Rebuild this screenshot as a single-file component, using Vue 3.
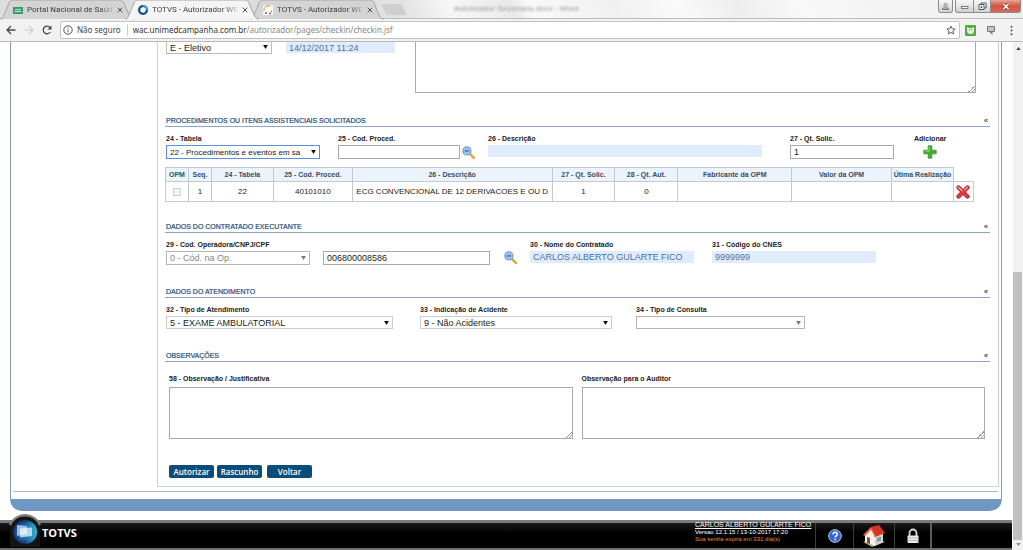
<script setup>
import { ref } from 'vue'

const tabs = [
  { title: 'Portal Nacional de Saúd', icon: 'portal', active: false },
  { title: 'TOTVS - Autorizador WE', icon: 'ring', active: true },
  { title: 'TOTVS - Autorizador WE', icon: 'dots', active: false },
]
const columns = [
  { label: 'OPM', width: 23 },
  { label: 'Seq.', width: 23 },
  { label: '24 - Tabela', width: 62 },
  { label: '25 - Cod. Proced.', width: 79 },
  { label: '26 - Descrição', width: 200 },
  { label: '27 - Qt. Solic.', width: 63 },
  { label: '28 - Qt. Aut.', width: 63 },
  { label: 'Fabricante da OPM', width: 114 },
  { label: 'Valor da OPM', width: 100 },
  { label: 'Útima Realização', width: 62 },
]
const total = 809
const rows = [['1', '22', '40101010', 'ECG CONVENCIONAL DE 12 DERIVACOES E OU D', '1', '0', '', '', '']]
const url = ref('wac.unimedcampanha.com.br')
</script>

<template>
  <div class="browser">
    <header class="tabstrip">
      <div class="tabs">
        <div v-for="(t, i) in tabs" :key="i" class="tab" :class="{ active: t.active }">
          <svg class="tab-shape" viewBox="0 0 134 19" preserveAspectRatio="none" aria-hidden="true">
            <path d="M0 19C3 19 3 17 4 15L9 3C10 1 11 0 13 0H120C122 0 123 1 124 3L129 15C130 17 131 19 134 19" />
          </svg>
          <svg v-if="t.icon === 'portal'" class="favicon" viewBox="0 0 10 10" aria-hidden="true">
            <rect y="2" width="10" height="7" fill="#2e9e69" />
            <path d="M1.500 6.500h7M2 4.500h2M6 4.500h2M5 3.500v2" stroke="#c4ecd6" />
          </svg>
          <svg v-else-if="t.icon === 'ring'" class="favicon" viewBox="0 0 10 10" aria-hidden="true">
            <circle cx="5" cy="5" r="5" fill="#15507c" />
            <path d="M5 0a5 5 0 0 1 5 5L5 5z" fill="#2aa9bd" />
            <circle cx="5" cy="5" r="2.700" fill="#f4fbff" />
          </svg>
          <svg v-else class="favicon" viewBox="0 0 10 10" fill="none" aria-hidden="true">
            <rect width="10" height="10" fill="#fbfbfb" />
            <path d="M7.500 1H5a4 4 0 0 0-4 4v1" stroke="#edb45c" stroke-width="1.300" />
            <path d="M2 8h2M6 8.500h2M8 6.500h1" stroke="#b0527a" stroke-width="1.300" />
          </svg>
          <span class="tab-title">{{ t.title }}</span>
          <button class="tab-close" aria-label="Fechar aba">
            <svg viewBox="0 0 6 6" aria-hidden="true"><path d="M.7.7l4.600 4.600M5.300.7L.7 5.300" stroke="#4c4c4c" fill="none" /></svg>
          </button>
        </div>
        <button class="new-tab" aria-label="Nova aba"></button>
      </div>
      <span class="ghost">Autorizador Secretaria.docx - Word</span>
      <div class="window-buttons">
        <button class="user" aria-label="Usuário">
          <svg viewBox="0 0 12 11" fill="none" stroke="#777"><circle cx="6" cy="4" r="1.500" /><path d="M3 8.500V7h6v1.500z" /></svg>
        </button>
        <button class="min" aria-label="Minimizar">
          <svg viewBox="0 0 14 11"><rect x="4" y="5.500" width="6.500" height="2" fill="#fff" stroke="#566070" stroke-width=".8" /></svg>
        </button>
        <button class="max" aria-label="Restaurar">
          <svg viewBox="0 0 14 11" fill="#fff" stroke="#4c5668"><path d="M6 2h5v5H6z" /><path d="M4 3.500h5V8.500H4zM6 5.500h1v1H6z" /></svg>
        </button>
        <button class="close" aria-label="Fechar">
          <svg viewBox="0 0 24 11"><path d="M10 3l5 5M15 3l-5 5" stroke="#743" stroke-width="2.600" /><path d="M10 3l5 5M15 3l-5 5" stroke="#fff" stroke-width="1.500" /></svg>
        </button>
      </div>
    </header>

    <nav class="toolbar">
      <button aria-label="Voltar página"><svg viewBox="0 0 10 10"><path d="M9.500 5H1.500M5 1L1 5l4 4" stroke="#484848" stroke-width="1.300" fill="none" /></svg></button>
      <button aria-label="Avançar"><svg viewBox="0 0 10 10"><path d="M.5 5h8M5 1l4 4-4 4" stroke="#cfcfcf" stroke-width="1.200" fill="none" /></svg></button>
      <button aria-label="Recarregar"><svg viewBox="0 0 10 10"><path d="M8.300 7A3.800 3.800 0 1 1 8 2.500" stroke="#484848" stroke-width="1.300" fill="none" /><path d="M9.500.5v4h-4z" fill="#484848" /></svg></button>
      <div class="address">
        <svg class="info" viewBox="0 0 10 10" fill="none" stroke="#555"><circle cx="5" cy="5" r="4.200" /><path d="M5 4.500v3M5 2.500v1" /></svg>
        <span class="insecure">Não seguro</span>
        <span class="url">{{ url }}<i>/autorizador/pages/checkin/checkin.jsf</i></span>
        <svg class="star" viewBox="0 0 10 10"><path d="M5 1l1.200 2.800 3 .2-2.300 2 .8 3L5 7.400 2.300 9l.8-3L.8 4l3-.2z" fill="none" stroke="#555" stroke-width=".9" /></svg>
      </div>
      <div class="extensions">
        <svg viewBox="0 0 11 11"><rect width="11" height="11" rx="1" fill="#4fae3e" /><path d="M2 2v3.500a3.500 3.500 0 0 0 7 0V2L7.500 3h-4z" fill="#e5f5df" /><path d="M4.500 4v1.500M6.500 4v1.500" stroke="#4fae3e" /></svg>
        <svg viewBox="0 0 11 11"><path d="M2 1.500h7v5H2z" fill="#c4c4c4" stroke="#777" /><path d="M4 7l3 3V7z" fill="#777" /></svg>
        <svg viewBox="0 0 11 11" fill="#555"><circle cx="5.500" cy="1.800" r="1" /><circle cx="5.500" cy="5.500" r="1" /><circle cx="5.500" cy="9.200" r="1" /></svg>
      </div>
    </nav>

    <div class="viewport">
      <div class="page">
        <main class="frame">
          <form class="panel" @submit.prevent>
            <div class="grid g-top">
              <div class="select cut"><select aria-label="Caráter do atendimento"><option>E - Eletivo</option></select><svg viewBox="0 0 6 5"><path d="M0 0h6L3 5z" /></svg></div>
              <input class="readonly cut-date" aria-label="Data" value="14/12/2017 11:24" readonly />
              <div class="area cut-area"><textarea aria-label="Indicação clínica"></textarea></div>
            </div>

            <section>
              <h2>PROCEDIMENTOS OU ITENS ASSISTENCIAIS SOLICITADOS<a href="#" aria-label="Recolher">«</a></h2>
              <div class="grid g-proc">
                <div class="field">
                  <label for="tabela">24 - Tabela</label>
                  <div class="select focus"><select id="tabela"><option>22 - Procedimentos e eventos em sa</option></select><svg viewBox="0 0 6 5"><path d="M0 0h6L3 5z" /></svg></div>
                </div>
                <div class="field">
                  <label for="cod">25 - Cod. Proced.</label>
                  <div class="with-icon">
                    <input id="cod" type="text" />
                    <button class="icon" aria-label="Pesquisar procedimento"><svg viewBox="0 0 12 12"><path d="M7 7l4 4" stroke="#d9a441" stroke-width="2.200" stroke-linecap="round" /><circle cx="4.500" cy="4.500" r="3.800" fill="#9cc3ee" stroke="#7f9cc4" /><path d="M2.500 4.500h4" stroke="#4d7fc0" stroke-width="1.500" /></svg></button>
                  </div>
                </div>
                <div class="field">
                  <label for="desc">26 - Descrição</label>
                  <input id="desc" class="readonly" readonly />
                </div>
                <div class="field">
                  <label for="qt">27 - Qt. Solic.</label>
                  <input id="qt" type="text" value="1" />
                </div>
                <div class="field add">
                  <label for="add">Adicionar</label>
                  <button id="add" class="icon"><svg viewBox="0 0 14 14"><path d="M5.200.8h3.600v4.400h4.400v3.600H8.800v4.400H5.200V8.800H.8V5.200h4.400z" fill="#45ae32" stroke="#2d8a22" stroke-width=".7" /><path d="M6.200 2v4.200H2" fill="none" stroke="#a6e38f" stroke-width=".8" /></svg></button>
                </div>
              </div>

              <table>
                <colgroup>
                  <col v-for="c in columns" :key="c.label" :style="{ width: (c.width / total) * 100 + '%' }" />
                  <col class="del-col" />
                </colgroup>
                <thead>
                  <tr><th v-for="c in columns" :key="c.label" scope="col">{{ c.label }}</th><td class="blank"></td></tr>
                </thead>
                <tbody>
                  <tr v-for="(r, i) in rows" :key="i">
                    <td><input type="checkbox" aria-label="OPM" disabled /></td>
                    <td v-for="(v, k) in r" :key="k">{{ v }}</td>
                    <td><button class="icon del" aria-label="Excluir"><svg viewBox="0 0 14 14"><path d="M2.500 2.500l9 9M11.500 2.500l-9 9" stroke="#a91620" stroke-width="4.200" stroke-linecap="round" /><path d="M2.500 2.500l9 9M11.500 2.500l-9 9" stroke="#e63b42" stroke-width="2.800" stroke-linecap="round" /><path d="M2.300 2.300L6 5.500M11.500 2.300L9 4.500" stroke="#f8b2b2" stroke-width="1.200" stroke-linecap="round" /></svg></button></td>
                  </tr>
                </tbody>
              </table>
            </section>

            <section class="after-table">
              <h2>DADOS DO CONTRATADO EXECUTANTE<a href="#" aria-label="Recolher">«</a></h2>
              <div class="grid g-exec">
                <div class="field">
                  <label for="oper">29 - Cod. Operadora/CNPJ/CPF</label>
                  <div class="select disabled"><select id="oper" disabled><option>0 - Cód. na Op.</option></select><svg viewBox="0 0 6 5"><path d="M0 0h6L3 5z" /></svg></div>
                </div>
                <div class="field end"><input type="text" aria-label="Código na operadora" value="006800008586" /></div>
                <div class="field end"><button class="icon" aria-label="Pesquisar contratado"><svg viewBox="0 0 12 12"><path d="M7 7l4 4" stroke="#d9a441" stroke-width="2.200" stroke-linecap="round" /><circle cx="4.500" cy="4.500" r="3.800" fill="#9cc3ee" stroke="#7f9cc4" /><path d="M2.500 4.500h4" stroke="#4d7fc0" stroke-width="1.500" /></svg></button></div>
                <div class="field">
                  <label for="nome">30 - Nome do Contratado</label>
                  <input id="nome" class="readonly" value="CARLOS ALBERTO GULARTE FICO" readonly />
                </div>
                <div class="field">
                  <label for="cnes">31 - Código do CNES</label>
                  <input id="cnes" class="readonly" value="9999999" readonly />
                </div>
              </div>
            </section>

            <section>
              <h2>DADOS DO ATENDIMENTO<a href="#" aria-label="Recolher">«</a></h2>
              <div class="grid g-atend">
                <div class="field">
                  <label for="tipo">32 - Tipo de Atendimento</label>
                  <div class="select light"><select id="tipo"><option>5 - EXAME AMBULATORIAL</option></select><svg viewBox="0 0 6 5"><path d="M0 0h6L3 5z" /></svg></div>
                </div>
                <div class="field">
                  <label for="acid">33 - Indicação de Acidente</label>
                  <div class="select light"><select id="acid"><option>9 - Não Acidentes</option></select><svg viewBox="0 0 6 5"><path d="M0 0h6L3 5z" /></svg></div>
                </div>
                <div class="field">
                  <label for="cons">34 - Tipo de Consulta</label>
                  <div class="select disabled"><select id="cons" disabled><option></option></select><svg viewBox="0 0 6 5"><path d="M0 0h6L3 5z" /></svg></div>
                </div>
              </div>
            </section>

            <section>
              <h2>OBSERVAÇÕES<a href="#" aria-label="Recolher">«</a></h2>
              <div class="notes">
                <div class="note">
                  <label for="obs">58 - Observação / Justificativa</label>
                  <div class="area"><textarea id="obs"></textarea></div>
                </div>
                <div class="note">
                  <label for="aud">Observação para o Auditor</label>
                  <div class="area"><textarea id="aud"></textarea></div>
                </div>
              </div>
              <div class="actions">
                <button>Autorizar</button><button>Rascunho</button><button class="back">Voltar</button>
              </div>
            </section>
          </form>
        </main>

        <footer>
          <div class="brand">
            <svg viewBox="0 0 36 34" aria-hidden="true">
              <defs>
                <radialGradient id="orb" cx=".5" cy=".5" r=".55">
                  <stop offset="0" stop-color="#3f8fd0" /><stop offset=".6" stop-color="#1d5aa0" /><stop offset="1" stop-color="#191a50" />
                </radialGradient>
                <linearGradient id="sheen"><stop offset=".5" stop-color="#27c7d6" stop-opacity="0" /><stop offset="1" stop-color="#27c7d6" /></linearGradient>
              </defs>
              <path d="M3 11A16.500 16.500 0 0 1 33 11V33H3z" fill="#141414" />
              <path d="M3 11A16.500 16.500 0 0 1 33 11" fill="none" stroke="#7d7d7d" stroke-width="2.500" />
              <circle cx="18" cy="18" r="12" fill="url(#orb)" /><circle cx="18" cy="18" r="12" fill="url(#sheen)" />
              <path d="M10 11l10 1v8L10 22z" fill="#b9d9f2" opacity=".8" />
              <path d="M13 14.500l12-1v8.500l-12 1.500z" fill="#fff" opacity=".65" />
            </svg>
            <strong>TOTVS</strong>
          </div>
          <div class="session">
            <a href="#">CARLOS ALBERTO GULARTE FICO</a>
            <span>Versao 12.1.15 / 13-10-2017 17:20</span>
            <span class="warn">Sua senha expira em 331 dia(s)</span>
          </div>
          <button class="help" aria-label="Ajuda"><svg viewBox="0 0 14 14"><circle cx="7" cy="7" r="6.300" fill="#3565cc" stroke="#b8cdf2" /><path d="M5 5.500c0-3 4.200-2.700 4.200-.2C9.200 7 7.200 6.800 7.200 8.500M7.200 9.700v1.500" stroke="#fff" stroke-width="1.500" fill="none" /></svg></button>
          <button class="home" aria-label="Início"><svg viewBox="0 0 24 24"><path d="M1 18l9 5 13-5-9-4z" fill="#92b178" /><path d="M3 10l7-6 3 9v9l-10-4z" fill="#f5f2ea" /><path d="M13 12l8-3v9l-8 4z" fill="#d9d3c7" /><path d="M9 3l8-2 6 8-10 4z" fill="#d43425" /><path d="M9 3l-8 8 2 1 6-6 4 7 1-1z" fill="#f0624b" /><path d="M5 13l3 1v6l-3-1z" fill="#8d4a2b" /><path d="M15 14l4-1.500v4L15 18z" fill="#7b98bb" /></svg></button>
          <button class="lock" aria-label="Bloquear"><svg viewBox="0 0 14 16"><path d="M3.500 8V5a3.500 3.500 0 0 1 7 0v3" fill="none" stroke="#d9d9d9" stroke-width="1.800" /><rect x="1.500" y="7.500" width="11" height="7.500" rx="1" fill="#e9e9e6" /><path d="M2 10h10M2 12.500h10" stroke="#b8b8b4" /></svg></button>
          <div class="rest"></div>
        </footer>
      </div>
      <div class="scrollbar" aria-hidden="true">
        <svg viewBox="0 0 6 4"><path d="M0 4l3-4 3 4z" fill="#404040" /></svg>
        <div class="track"><div class="thumb"></div></div>
        <svg viewBox="0 0 6 4"><path d="M0 0l3 4 3-4z" fill="#8a8a8a" /></svg>
      </div>
    </div>
  </div>
</template>

<style>
body { margin: 0; background: #fff; }
</style>

<style scoped>
* { box-sizing: border-box; }
.browser { min-height: 100vh; display: flex; flex-direction: column; font-family: "Liberation Sans", Arial, sans-serif; font-size: 8px; color: #222; }
button { border: 0; padding: 0; background: none; font: inherit; display: block; }
svg { display: block; }

.tabstrip { height: 19px; display: flex; align-items: flex-start; background: linear-gradient(62deg, #dcdcdc 0 34%, #e4e4e4 40%, #f7f7f7 44%, #e9e9e9 50%, #fafafa 52%, #f0f0f0 60%, #fafafa 66%, #eee 72%, #f8f8f8 78%, #ededed); border-bottom: 1px solid #bdbdbd; }
.tabs { display: flex; padding-left: 4px; }
.tab { width: 125px; height: 19px; position: relative; display: flex; align-items: center; padding: 0 6px 0 9px; font-family: Roboto, sans-serif; }
.tab-shape { position: absolute; left: -4px; top: 0; width: 134px; height: 19px; overflow: visible; }
.tab-shape path { fill: #d4d4d4; stroke: #a6a6a6; }
.active { z-index: 1; }
.active .tab-shape path { fill: #f4f4f4; }
.favicon { width: 10px; height: 10px; flex: none; position: relative; }
.tab-title { position: relative; flex: 1; margin: 0 2px 0 4px; white-space: nowrap; color: #3c3c3c; -webkit-mask-image: linear-gradient(90deg, #000 82%, transparent); mask-image: linear-gradient(90deg, #000 82%, transparent); }
.tab-close { position: relative; }
.tab-close svg { width: 6px; height: 6px; }
.new-tab { width: 20px; height: 11px; margin: 4px 0 0 5px; background: #cfcfcf; border-radius: 2px; transform: skewX(24deg); }
.ghost { margin-left: 50px; line-height: 17px; color: #999; filter: blur(1px); }
.window-buttons { margin-left: auto; display: flex; padding-right: 2px; }
.window-buttons button { height: 13px; border: 1px solid #8d8d8d; border-top: 0; background: linear-gradient(#f7f7f7, #d2d2d2); }
.window-buttons svg { height: 11px; width: 100%; }
.window-buttons .user { width: 15px; margin-right: 2px; border-radius: 0 0 3px 3px; }
.window-buttons .min { width: 19px; border-radius: 0 0 0 3px; }
.window-buttons .max { width: 17px; border-left: 0; }
.window-buttons .close { width: 30px; border-left: 0; border-radius: 0 0 3px 0; background: linear-gradient(#e8a597, #d0543f 50%, #d8685a); }

.toolbar { height: 23px; display: flex; align-items: center; padding: 0 6px; background: #f2f2f2; border-bottom: 1px solid #b9b9b9; font-family: "Noto Sans", sans-serif; }
.toolbar button { margin-right: 8px; }
.toolbar button svg { width: 10px; height: 10px; }
.address { flex: 1; height: 18px; display: flex; align-items: center; border: 1px solid #c2c2c2; border-radius: 2px; background: #fff; padding: 0 3px 0 2px; white-space: nowrap; line-height: 12px; }
.info, .star { width: 10px; height: 10px; flex: none; }
.insecure { margin-left: 4px; padding-right: 6px; border-right: 1px solid #ccc; color: #444; }
.url { margin-left: 5px; flex: 1; color: #333; }
.url i { font-style: normal; color: #888; }
.extensions { display: flex; gap: 9px; margin-left: 5px; }
.extensions svg { width: 11px; height: 11px; }
.extensions svg:nth-child(2) { width: 12px; }

.viewport { flex: 1; display: flex; }
.page { flex: 1; min-width: 0; display: flex; flex-direction: column; }
.frame { margin: 0 10px; border: 1px solid #7c9cc4; border-top: 0; border-bottom: 12px solid #7097c1; border-radius: 0 0 12px 12px; padding: 0 2px 12px; }
.panel { border: 1px solid #c3d5e8; border-top: 0; margin-left: 144px; padding: 0 8px 8px 7px; position: relative; }
.panel::after { content: ""; position: absolute; left: -145px; right: 0; bottom: -6px; border-bottom: 1px solid #a9bbd0; }

.grid { display: grid; padding-left: 1px; }
.g-top { grid-template-columns: 120fr 129fr 575fr; }
.g-proc { grid-template-columns: 172fr 150fr 302fr 124fr 76fr; }
.g-exec { grid-template-columns: 157fr 181fr 26fr 182fr 278fr; }
.g-atend { grid-template-columns: 254fr 216fr 354fr; }
.g-top > .select { margin-right: 14px; }
.g-top > .readonly { width: calc(100% - 20px); }
.g-top > .area { margin-right: 14px; }
.g-proc .field:nth-child(1) { padding-right: 18px; }
.g-proc .field:nth-child(2) { padding-right: 13px; }
.g-proc .field:nth-child(3) { padding-right: 28px; }
.g-proc .field:nth-child(4) { padding-right: 20px; }
.g-exec .field:nth-child(1) { padding-right: 13px; }
.g-exec .field:nth-child(2) { padding-right: 14px; }
.g-exec .field:nth-child(4) { padding-right: 18px; }
.g-exec .field:nth-child(5) { padding-right: 114px; }
.g-atend .field:nth-child(1) { padding-right: 27px; }
.g-atend .field:nth-child(2) { padding-right: 24px; }
.g-atend .field:nth-child(3) { padding-right: 185px; }

section { padding-top: 19px; }
.g-top + section { padding-top: 20px; }
section.after-table { padding-top: 17px; }
h2 { margin: 0 0 7px; height: 14px; display: flex; justify-content: space-between; padding: 0 2px 0 1px; border-bottom: 1px solid #8da6c2; font-size: 7px; line-height: 16px; font-weight: 400; color: #44658f; text-shadow: 0 0 0 #44658f; }
h2 a { color: #4d5f7c; text-decoration: none; }
label { display: block; font-size: 7px; line-height: 10px; font-weight: 700; color: #222; margin-bottom: 1px; white-space: nowrap; }
.field { min-width: 0; }
.end { display: flex; align-items: flex-start; padding-top: 11px; }
input:not([type="checkbox"]) { display: block; width: 100%; height: 14px; border: 1px solid #aaa; background: #fff; padding: 0 3px; font: inherit; font-size: 9px; color: #222; border-radius: 0; outline: 0; }
input.readonly:not([type="checkbox"]) { height: 12px; margin-top: 1px; border: 0; background: #e0ecfc; color: #4d73a8; padding: 0 3px; }
.select { position: relative; }
.select select { appearance: none; display: block; width: 100%; height: 14px; border: 1px solid #aaa; border-radius: 0; background: #fff; padding: 0 12px 0 3px; font: inherit; font-size: 9px; color: #222; outline: 0; opacity: 1; }
.select svg { position: absolute; right: 4px; top: 5px; width: 5px; height: 4px; pointer-events: none; fill: #111; }
.select.focus select { border-color: #5d8fe0; font-size: 8px; }
.light select { height: 13px; border-color: #ccc; }
.disabled select { color: #888; border-color: #b5b5b5; }
.disabled svg { fill: #777; }
.g-atend .disabled select { height: 13px; }
.cut select { height: 12px; border-top: 0; border-color: #bbb; }
.cut svg { top: 3px; }
.g-top > input.readonly.cut-date { height: 11px; margin: 0; }
.with-icon { display: flex; align-items: center; gap: 2px; }
.icon svg { width: 13px; height: 13px; }
.add .icon { margin: 0 0 0 9px; }
.add .icon svg { width: 14px; height: 14px; }
textarea { display: block; width: 100%; height: 52px; border: 1px solid #aaa; background: #fff; resize: none; font: inherit; outline: 0; border-radius: 0; }
.area { position: relative; }
.area::after { content: ""; position: absolute; right: 1px; bottom: 1px; width: 7px; height: 7px; background: linear-gradient(135deg, transparent 50%, #999 50% 58%, transparent 58% 75%, #999 75% 84%, transparent 84%); }
.cut-area textarea { height: 51px; border-top: 0; }

table { width: calc(100% - 16px); margin-top: 8px; border-collapse: collapse; table-layout: fixed; }
.del-col { width: 20px; }
th, td { border: 1px solid #c3cad2; padding: 0; text-align: center; white-space: nowrap; overflow: hidden; }
th { height: 14px; background: #ebf4fd; font-size: 7px; line-height: 12px; color: #3c4c60; }
td { height: 20px; line-height: 12px; }
.blank { height: 14px; border-top: 0; border-right: 0; }
td input { display: block; appearance: none; width: 8px; height: 8px; margin: 0 auto; border: 1px solid #ccc; border-radius: 1px; background: #f5f5f5; }
.del { margin: 0 auto; }
.del svg { width: 14px; height: 14px; }

.notes { display: grid; grid-template-columns: 1fr 1fr; gap: 9px; margin-top: 12px; padding: 0 5px 0 4px; }
.note label { margin-bottom: 3px; }
.actions { display: flex; gap: 3px; margin-top: 26px; padding-left: 4px; }
.actions button { width: 45px; height: 13px; border-radius: 2px; background: #0b4c78; color: #fff; font: 600 8px/13px "Open Sans", sans-serif; }
.actions .back { margin-left: 2px; }

footer { height: 30px; margin-top: auto; display: flex; border-top: 3px solid #7b7b7b; border-bottom: 2px solid #6e6e6e; background: linear-gradient(#1b1b1b, #000 40%); color: #fff; }
.brand { display: flex; align-items: center; margin-right: auto; padding: 0 0 5px 7px; }
.brand svg { width: 36px; height: 34px; margin-top: -4px; }
.brand strong { font: 700 11px/16px "Open Sans", sans-serif; margin-left: -1px; }
.session { width: 120px; margin-top: -2px; font-size: 6px; line-height: 7px; white-space: nowrap; }
.session a { display: block; color: #fff; font-size: 7px; line-height: 8px; text-decoration: underline; }
.session span { display: block; }
.session .warn { color: #e88d16; }
footer button { display: flex; align-items: center; justify-content: center; border-left: 1px solid #3c3c3c; }
.help { width: 38px; }
.home { width: 41px; }
.lock { width: 36px; }
.help svg { width: 14px; height: 14px; }
.home svg { width: 24px; height: 24px; }
.lock svg { width: 14px; height: 16px; }
.rest { width: 82px; border-left: 2px solid #5c5c5c; }

.scrollbar { width: 10px; display: flex; flex-direction: column; align-items: center; background: #f1f1f1; margin-left: 1px; padding: 5px 0 4px; }
.scrollbar svg { width: 5px; height: 3px; }
.track { flex: 1; width: 100%; display: flex; flex-direction: column; justify-content: flex-end; padding: 3px 1px 3px 0; }
.thumb { height: 55%; background: #c1c1c1; }
</style>
